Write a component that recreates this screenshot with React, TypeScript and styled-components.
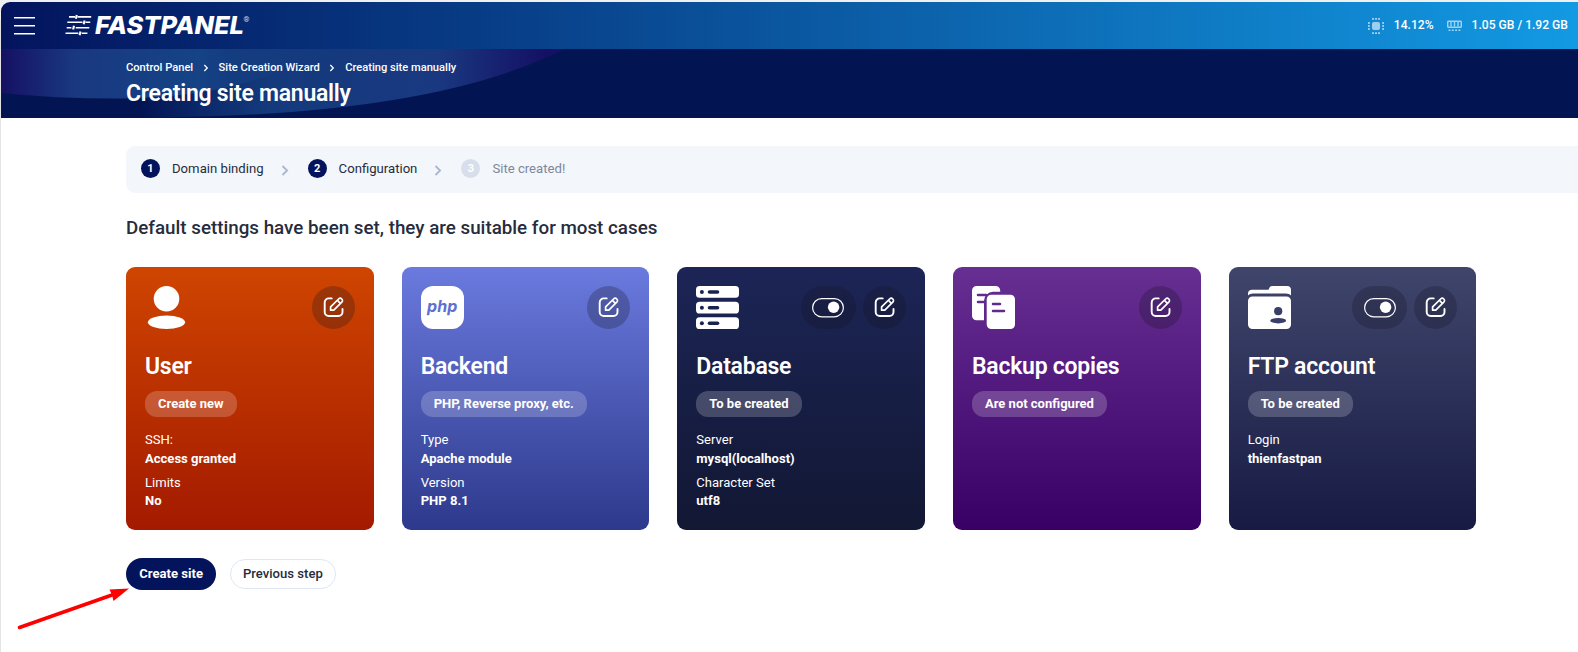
import React from 'react';
import styled, { createGlobalStyle } from 'styled-components';

const GlobalStyle = createGlobalStyle`
  *, *::before, *::after { box-sizing: border-box; }
  body {
    margin: 0;
    background: #f0f0f0;
    color: #272c3c;
    font-family: Roboto, "Liberation Sans", sans-serif;
    font-size: 13.05px;
    overflow: hidden;
  }
`;

const Page = styled.div`
  position: relative;
  height: 652px;
  padding: 2px 0 0 1px;
  background: linear-gradient(#f0f0f0 20px, #e4e4e6 20px);
`;

const Shell = styled.div`
  height: 650px;
  overflow: hidden;
  border-top-left-radius: 9px;
  background: #fff;
`;

const TopBar = styled.header`
  display: flex;
  align-items: center;
  height: 47px;
  padding: 0 10px 0 13px;
  background: linear-gradient(90deg, #03145d 0%, #129ae3 100%);
  color: #fff;
`;

const MenuButton = styled.button`
  display: flex;
  padding: 0;
  border: 0;
  background: none;
  color: inherit;
`;

const Logo = styled.svg`
  display: block;
  margin-left: 30px;
  overflow: visible;
`;

const LogoText = styled.text`
  font: italic 800 25px Inter, Roboto, sans-serif;
`;

const Stats = styled.div`
  display: flex;
  align-items: center;
  margin-left: auto;
  font-size: 12.1px;
  font-weight: 500;
`;

const Stat = styled.span`
  display: flex;
  align-items: center;
  gap: 10px;
  margin-left: 13px;
`;

const StatValue = styled.span`
  padding-bottom: 2px;
`;

const TitleBar = styled.section`
  position: relative;
  height: 69px;
  padding: 11px 0 0 125px;
  background: #031453;
  color: #fff;
`;

const Waves = styled.svg`
  position: absolute;
  inset: 0 auto auto 0;
`;

const Crumbs = styled.nav`
  position: relative;
  display: flex;
  align-items: center;
  height: 14px;
  font-size: 11.13px;
  font-weight: 500;
`;

const CrumbArrow = styled.svg`
  margin: 2px 9.7px 0;
`;

const PageTitle = styled.h1`
  position: relative;
  margin: 6px 0 0;
  font-size: 23px;
  font-weight: 600;
  letter-spacing: -0.27px;
  line-height: 28px;
`;

const Main = styled.main`
  padding: 28px 0 0 125px;
`;

const Steps = styled.ol`
  display: flex;
  align-items: center;
  height: 47px;
  margin: 0;
  padding: 0 0 2px 15px;
  list-style: none;
  border-radius: 9px 0 0 9px;
  background: #f3f6fb;
  font-size: 13.15px;
`;

const Step = styled.li<{ $muted?: boolean }>`
  display: flex;
  align-items: center;
  gap: 12px;
  color: ${({ $muted }) => ($muted ? '#7f8799' : '#272c3c')};
`;

const StepNumber = styled.span<{ $muted?: boolean }>`
  width: 19px;
  height: 19px;
  border-radius: 50%;
  background: ${({ $muted }) => ($muted ? '#d8dfeb' : '#03145d')};
  color: #fff;
  font-size: 11px;
  font-weight: 700;
  line-height: 19px;
  text-align: center;
`;

const StepArrow = styled.svg`
  margin: 3px 19px 0 17px;
`;

const Lead = styled.h2`
  margin: 22px 0 0;
  font-size: 18.79px;
  font-weight: 500;
  line-height: 26px;
`;

const Cards = styled.div`
  display: grid;
  grid-template-columns: repeat(5, 1fr);
  gap: 28px;
  width: 1350.3px;
  margin-top: 26px;
`;

const Card = styled.article<{ $from: string; $to: string }>`
  height: 263px;
  padding: 19px;
  border-radius: 9px;
  background: linear-gradient(${({ $from, $to }) => `${$from}, ${$to}`});
  color: #fff;
`;

const CardHead = styled.div`
  display: flex;
  gap: 7px;
  height: 43px;
`;

const CardIcon = styled.svg`
  display: block;
  margin-right: auto;
`;

const PhpBadge = styled.div`
  width: 43px;
  height: 43px;
  margin-right: auto;
  border-radius: 12px;
  background: #fff;
  color: #5f70d0;
  font: italic 700 16px/40px Inter, "Open Sans", sans-serif;
  text-align: center;
`;

const RoundButton = styled.button<{ $wide?: boolean }>`
  display: flex;
  align-items: center;
  justify-content: center;
  width: ${({ $wide }) => ($wide ? 55 : 43)}px;
  height: 43px;
  padding: 0;
  border: 0;
  border-radius: 22px;
  background: rgba(18, 20, 32, 0.26);
  color: #fff;
`;

const CardTitle = styled.h3`
  margin: 24px 0 0;
  font-size: 23px;
  font-weight: 600;
  letter-spacing: -0.25px;
  line-height: 28px;
`;

const Tag = styled.span`
  display: inline-block;
  height: 26px;
  margin-top: 10px;
  padding: 0 13px;
  border-radius: 12px;
  background: rgba(255, 255, 255, 0.2);
  font-size: 13px;
  font-weight: 700;
  line-height: 26px;
  vertical-align: top;
`;

const Facts = styled.dl`
  margin: 13px 0 0;
`;

const FactName = styled.dt`
  height: 19.5px;
  line-height: 19px;
`;

const FactValue = styled.dd`
  height: 23px;
  margin: 0;
  font-weight: 700;
  line-height: 18px;
`;

const Actions = styled.div`
  display: flex;
  align-items: center;
  gap: 14px;
  margin-top: 28px;
`;

const Button = styled.button<{ $primary?: boolean }>`
  height: ${({ $primary }) => ($primary ? 32 : 30)}px;
  padding: 0 ${({ $primary }) => ($primary ? 13.2 : 11.8)}px 1.5px;
  border: ${({ $primary }) => ($primary ? '0' : '1px solid #dfe7f5')};
  border-radius: 16px;
  background: ${({ $primary }) => ($primary ? '#03145d' : '#fff')};
  color: ${({ $primary }) => ($primary ? '#fff' : '#272c3c')};
  font-family: inherit;
  font-size: 13.1px;
  font-weight: ${({ $primary }) => ($primary ? 700 : 500)};
`;

const Pointer = styled.svg`
  position: absolute;
  left: 14px;
  top: 584px;
`;

const EditIcon = () => (
  <svg width="21" height="21" viewBox="-0.700 0 21 21" fill="none" stroke="currentColor" strokeWidth="1.900" strokeLinecap="round" strokeLinejoin="round">
    <path d="M8 1.400H5a4 4 0 0 0-4 4v9.600a4 4 0 0 0 4 4h9.800a4 4 0 0 0 4-4v-3" />
    <path d="M6.900 13.200V9.900l8-7.900a2.200 2.200 0 0 1 3.200 3.200L10.100 13.200Z M14 3.600l2.700 2.700" strokeWidth="1.700" />
  </svg>
);

const ToggleIcon = () => (
  <svg width="32" height="20" viewBox="0 0 32 20">
    <rect x="0.6" y="0.6" width="30.8" height="18.200" rx="9.100" fill="none" stroke="#fff" strokeWidth="1.200" />
    <circle cx="21.600" cy="9.200" r="5.700" fill="#fff" />
  </svg>
);

const UserIcon = () => (
  <CardIcon width="43" height="43" viewBox="0 0 43 43" fill="#fff">
    <circle cx="21.500" cy="12.800" r="12.800" />
    <ellipse cx="21.500" cy="36.200" rx="18.600" ry="6.800" />
  </CardIcon>
);

const DatabaseIcon = () => (
  <CardIcon width="43" height="43" viewBox="0 0 43 43">
    {[0, 15.7, 31.2].map((y) => (
      <g key={y}>
        <rect y={y} width="43" height="11.800" rx="3.600" fill="#fff" />
        <circle cx="5.900" cy={y + 6} r="2" fill="#1a2250" />
        <path d={`M13.500 ${y + 6}h8`} stroke="#1a2250" strokeWidth="3.600" strokeLinecap="round" />
      </g>
    ))}
  </CardIcon>
);

const CopiesIcon = () => (
  <CardIcon width="43" height="43" viewBox="0 0 43 43">
    <path d="M4.600 0H23.600a4.600 4.600 0 0 1 4.600 4.600V5.800H21a9 9 0 0 0-9 9V34.300H4.600A4.600 4.600 0 0 1 0 29.700V4.600A4.600 4.600 0 0 1 4.600 0Z" fill="#fff" />
    <rect x="14.700" y="8.700" width="28.300" height="34.300" rx="4.600" fill="#fff" />
    <path d="M6 8.900h8M6 15.900h5.500M21 17.900h7M21 24.900h11" stroke="#612b8c" strokeWidth="2.500" strokeLinecap="round" />
  </CardIcon>
);

const FolderIcon = () => (
  <CardIcon width="43" height="43" viewBox="0 0 43 43">
    <path d="M0 9.500V7.500A4 4 0 0 1 4 3.800H20.500C21.500 1 22.500 0 25 0H39a4 4 0 0 1 4 4V9.500C41.500 8.300 40 7.600 38 7.600H5C3 7.600 1.500 8.300 0 9.500Z" fill="#fff" />
    <path d="M4.500 10.400H38.500A4.500 4.500 0 0 1 43 14.900V38.500A4.500 4.500 0 0 1 38.500 43H4.500A4.500 4.500 0 0 1 0 38.500V14.900A4.500 4.500 0 0 1 4.500 10.400Z" fill="#fff" />
    <circle cx="30.200" cy="25.200" r="4.100" fill="#393f66" />
    <ellipse cx="30.200" cy="34.700" rx="7.900" ry="2.700" fill="#393f66" />
  </CardIcon>
);

type CardData = {
  title: string;
  tag: string;
  from: string;
  to: string;
  icon: React.ReactNode;
  toggle?: boolean;
  facts: [string, string][];
};

const cards: CardData[] = [
  { title: 'User', tag: 'Create new', from: '#cf4500', to: '#a31a00', icon: <UserIcon />, facts: [['SSH:', 'Access granted'], ['Limits', 'No']] },
  { title: 'Backend', tag: 'PHP, Reverse proxy, etc.', from: '#6a7ade', to: '#2d398b', icon: <PhpBadge>php</PhpBadge>, facts: [['Type', 'Apache module'], ['Version', 'PHP 8.1']] },
  { title: 'Database', tag: 'To be created', from: '#1c2556', to: '#121733', icon: <DatabaseIcon />, toggle: true, facts: [['Server', 'mysql(localhost)'], ['Character Set', 'utf8']] },
  { title: 'Backup copies', tag: 'Are not configured', from: '#672f92', to: '#380065', icon: <CopiesIcon />, facts: [] },
  { title: 'FTP account', tag: 'To be created', from: '#40456c', to: '#171b43', icon: <FolderIcon />, toggle: true, facts: [['Login', 'thienfastpan']] },
];

const Chevron = () => (
  <CrumbArrow width="6" height="8" viewBox="0 0 6 8" fill="none" stroke="#fff" strokeWidth="1.300">
    <path d="M1.300 1l3 3-3 3" />
  </CrumbArrow>
);

const StepChevron = () => (
  <StepArrow width="8" height="11" viewBox="0 0 8 11" fill="none" stroke="#a9b7d1" strokeWidth="1.800">
    <path d="M1.500 1l4.600 4.500-4.600 4.500" />
  </StepArrow>
);

export default function App() {
  return (
    <Page>
      <GlobalStyle />
      <Shell>
        <TopBar>
          <MenuButton aria-label="Menu">
            <svg width="21" height="20" viewBox="0 0 21 20" stroke="#fff" strokeWidth="1.600">
              <path d="M0 1.800h21M0 9.800h21M0 17.800h21" />
            </svg>
          </MenuButton>
          <Logo width="190" height="30" viewBox="0 -3 190 30" fill="#fff">
            <g stroke="#fff" strokeWidth="1.600">
              <path d="M4 2.900h6M12.500 2.900h13.700M2.300 8.300h15.200M20.500 8.300h4.800M1.700 13.700h4.700M10.700 13.700h13.600M0.500 19.300h12.800M16.700 19.300h5.700" />
              <path d="M11.800 1l-.9 3.800M19.600 6.400l-.9 3.800M9 11.800l-.9 3.800M15.500 17.400l-.9 3.800" strokeWidth="2.100" />
            </g>
            <LogoText x="30" y="20.400" textLength="149" lengthAdjust="spacingAndGlyphs">FASTPANEL</LogoText>
            <text x="178.500" y="8" fontSize="7.500" fontFamily="Roboto" opacity="0.800">®</text>
          </Logo>
          <Stats>
            <Stat>
              <svg width="16" height="16" viewBox="0 0 16 16" fill="#fff" opacity="0.600">
                <rect x="4" y="4" width="8" height="8" rx="2" />
                <path d="M4 0.900h8M4 15.100h8M0.900 4v8M15.100 4v8" stroke="#fff" strokeWidth="1.700" strokeDasharray="2 1" />
              </svg>
              <StatValue>14.12%</StatValue>
            </Stat>
            <Stat>
              <svg width="15" height="12" viewBox="0 0 15 12" fill="none" stroke="#fff" opacity="0.600">
                <rect x="0.700" y="1.200" width="13.600" height="6" rx="1" strokeWidth="1.500" />
                <path d="M4 1.500v5M7.500 1.500v5M11 1.500v5" strokeWidth="1.400" />
                <path d="M1.500 10.300h12" strokeWidth="1.500" strokeDasharray="2 1.300" />
              </svg>
              <StatValue>1.05 GB / 1.92 GB</StatValue>
            </Stat>
          </Stats>
        </TopBar>
        <TitleBar>
          <Waves width="600" height="69" viewBox="0 0 600 69">
            <defs>
              <linearGradient id="waveLeft" gradientUnits="userSpaceOnUse" x1="0" y1="0" x2="330" y2="0">
                <stop offset="0" stopColor="#151063" />
                <stop offset="0.220" stopColor="#193880" />
                <stop offset="0.600" stopColor="#154386" />
                <stop offset="1" stopColor="#153a80" stopOpacity="0" />
              </linearGradient>
              <linearGradient id="waveRight" gradientUnits="userSpaceOnUse" x1="140" y1="0" x2="565" y2="0">
                <stop offset="0" stopColor="#154386" stopOpacity="0" />
                <stop offset="0.300" stopColor="#143a7c" />
                <stop offset="0.700" stopColor="#193880" />
                <stop offset="0.950" stopColor="#151063" />
              </linearGradient>
            </defs>
            <path d="M140 0H563Q430 68 140 68.500Z" fill="url(#waveRight)" />
            <path d="M0 0H320Q250 47 125 49.500Q60 50 0 44Z" fill="url(#waveLeft)" />
          </Waves>
          <Crumbs>
            Control Panel
            <Chevron />
            Site Creation Wizard
            <Chevron />
            Creating site manually
          </Crumbs>
          <PageTitle>Creating site manually</PageTitle>
        </TitleBar>
        <Main>
          <Steps>
            <Step><StepNumber>1</StepNumber>Domain binding</Step>
            <StepChevron />
            <Step><StepNumber>2</StepNumber>Configuration</Step>
            <StepChevron />
            <Step $muted><StepNumber $muted>3</StepNumber>Site created!</Step>
          </Steps>
          <Lead>Default settings have been set, they are suitable for most cases</Lead>
          <Cards>
            {cards.map((card) => (
              <Card key={card.title} $from={card.from} $to={card.to}>
                <CardHead>
                  {card.icon}
                  {card.toggle && <RoundButton $wide aria-label="Toggle"><ToggleIcon /></RoundButton>}
                  <RoundButton aria-label="Edit"><EditIcon /></RoundButton>
                </CardHead>
                <CardTitle>{card.title}</CardTitle>
                <Tag>{card.tag}</Tag>
                <Facts>
                  {card.facts.map(([name, value]) => (
                    <React.Fragment key={name}>
                      <FactName>{name}</FactName>
                      <FactValue>{value}</FactValue>
                    </React.Fragment>
                  ))}
                </Facts>
              </Card>
            ))}
          </Cards>
          <Actions>
            <Button $primary>Create site</Button>
            <Button>Previous step</Button>
          </Actions>
        </Main>
      </Shell>
      <Pointer width="118" height="50" viewBox="0 0 118 50">
        <path d="M5.500 43.500L98 11" stroke="#fe0000" strokeWidth="3.600" strokeLinecap="round" />
        <path d="M115 4.500L95.500 5.500L98 11L99.500 17Z" fill="#fe0000" />
      </Pointer>
    </Page>
  );
}
